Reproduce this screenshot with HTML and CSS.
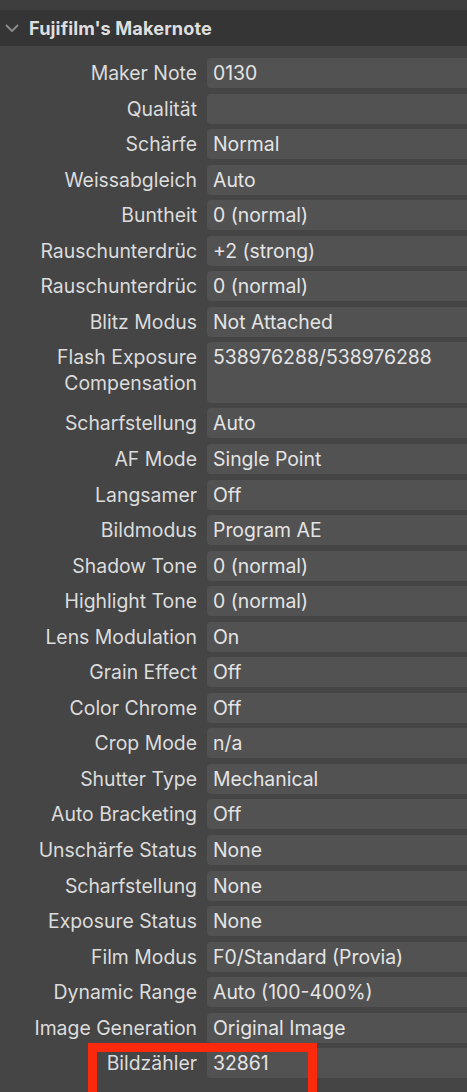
FILE: index.html
```html
<!DOCTYPE html>
<html>
<head>
<meta charset="utf-8">
<link rel="stylesheet" href="styles.css">
</head>
<body>
<div class="panel">
  <div class="topstrip"></div>
  <div class="header">
    <svg class="chev" width="14" height="9" viewBox="0 0 14 9"><path d="M1.5 1.5 L7 7 L12.5 1.5" fill="none" stroke="#8c8c8c" stroke-width="1.8" stroke-linecap="round" stroke-linejoin="round"/></svg>
    <span class="title">Fujifilm's Makernote</span>
  </div>
  <div class="rows">
    <div class="label">Maker Note</div><div class="value">0130</div>
    <div class="label">Qualität</div><div class="value"></div>
    <div class="label">Schärfe</div><div class="value">Normal</div>
    <div class="label">Weissabgleich</div><div class="value">Auto</div>
    <div class="label">Buntheit</div><div class="value">0 (normal)</div>
    <div class="label">Rauschunterdrüc</div><div class="value">+2 (strong)</div>
    <div class="label">Rauschunterdrüc</div><div class="value">0 (normal)</div>
    <div class="label">Blitz Modus</div><div class="value">Not Attached</div>
    <div class="label double">Flash Exposure<br>Compensation</div><div class="value double">538976288/538976288</div>
    <div class="label">Scharfstellung</div><div class="value">Auto</div>
    <div class="label">AF Mode</div><div class="value">Single Point</div>
    <div class="label">Langsamer</div><div class="value">Off</div>
    <div class="label">Bildmodus</div><div class="value">Program AE</div>
    <div class="label">Shadow Tone</div><div class="value">0 (normal)</div>
    <div class="label">Highlight Tone</div><div class="value">0 (normal)</div>
    <div class="label">Lens Modulation</div><div class="value">On</div>
    <div class="label">Grain Effect</div><div class="value">Off</div>
    <div class="label">Color Chrome</div><div class="value">Off</div>
    <div class="label">Crop Mode</div><div class="value">n/a</div>
    <div class="label">Shutter Type</div><div class="value">Mechanical</div>
    <div class="label">Auto Bracketing</div><div class="value">Off</div>
    <div class="label">Unschärfe Status</div><div class="value">None</div>
    <div class="label">Scharfstellung</div><div class="value">None</div>
    <div class="label">Exposure Status</div><div class="value">None</div>
    <div class="label">Film Modus</div><div class="value">F0/Standard (Provia)</div>
    <div class="label">Dynamic Range</div><div class="value">Auto (100-400%)</div>
    <div class="label">Image Generation</div><div class="value">Original Image</div>
    <div class="label">Bildzähler</div><div class="value">32861</div>
  </div>
  <div class="highlight"></div>
</div>
</body>
</html>
```
FILE: styles.css
```css
html, body {
  margin: 0;
  padding: 0;
  background: #454545;
  overflow: hidden;
}
.panel {
  position: relative;
  width: 467px;
  height: 1092px;
  overflow: hidden;
  font-family: Inter, "Noto Sans", sans-serif;
  color: #e2e2e2;
}
.topstrip {
  height: 10px;
  background: #3e3e3e;
}
.header {
  height: 36px;
  background: #353535;
  display: flex;
  align-items: center;
  padding-left: 5px;
  gap: 10px;
}
.chev {
  display: block;
  margin-top: 1px;
}
.title {
  font-weight: 700;
  font-size: 18.2px;
  color: #dedede;
  letter-spacing: 0.1px;
}
.rows {
  display: grid;
  grid-template-columns: 197px 1fr;
  column-gap: 10px;
  row-gap: 5.56px;
  padding-top: 12px;
  margin-right: -12px;
}
.label {
  font-size: 19.4px;
  line-height: 26px;
  text-align: right;
  height: 30px;
  padding-top: 2px;
  box-sizing: border-box;
  color: #dcdcdc;
  white-space: nowrap;
}
.value {
  background: #525252;
  border-radius: 4px;
  height: 30px;
  font-size: 19.4px;
  line-height: 26px;
  padding: 2px 6px;
  box-sizing: border-box;
  color: #e4e4e4;
  white-space: nowrap;
}
.label.double, .value.double {
  height: 60.5px;
}
.highlight {
  position: absolute;
  left: 88px;
  top: 1043px;
  width: 229px;
  height: 70px;
  border: 9px solid #fc2a0c;
  box-sizing: border-box;
}
```
